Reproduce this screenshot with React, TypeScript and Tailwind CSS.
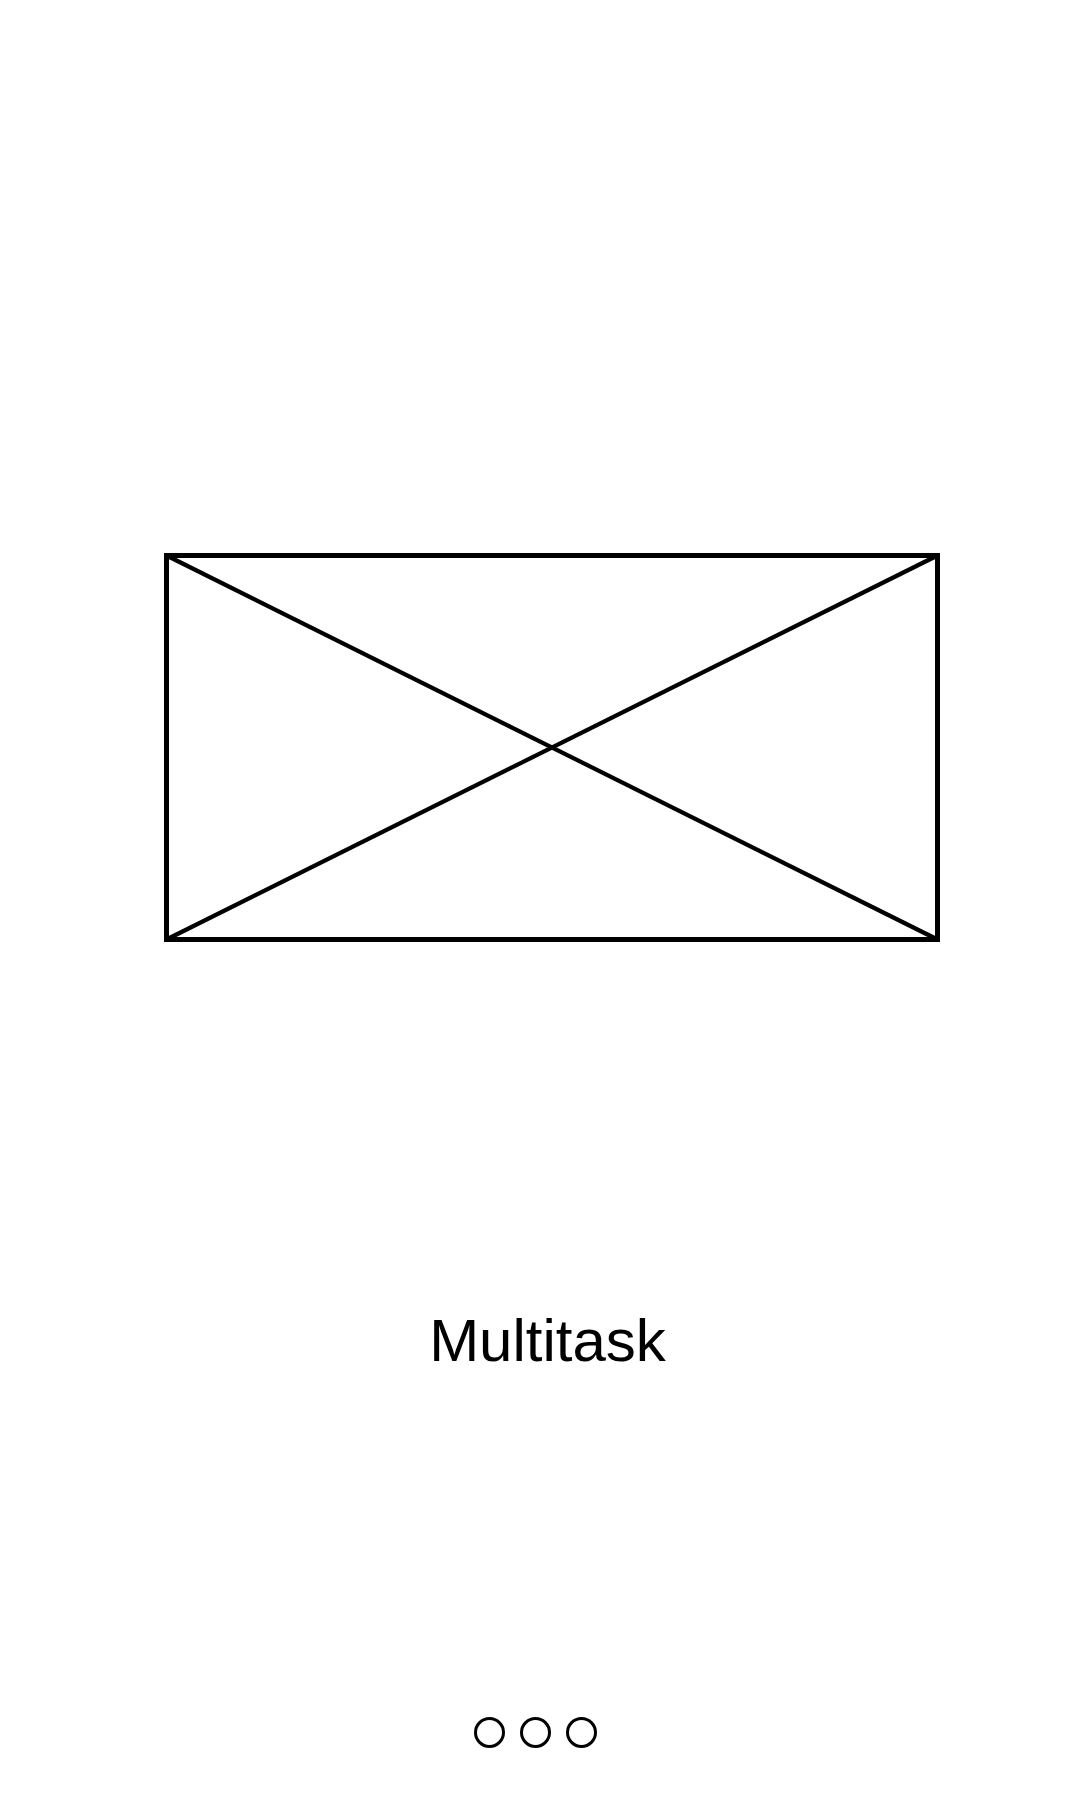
export default function App() {
  return (
    <div className="w-[1080px] h-[1800px] bg-white flex flex-col font-['Liberation_Sans',Arial,sans-serif] text-black">
      {/* image placeholder */}
      <div className="mt-[553px] ml-[164px]">
        <svg width="776" height="389" viewBox="0 0 776 389" className="block">
          <rect x="2.5" y="2.5" width="771" height="384" fill="none" stroke="#000" strokeWidth="5" />
          <line x1="2.5" y1="2.5" x2="773.5" y2="386.5" stroke="#000" strokeWidth="4.2" />
          <line x1="2.5" y1="386.5" x2="773.5" y2="2.5" stroke="#000" strokeWidth="4.2" />
        </svg>
      </div>

      <div className="mt-[369px] flex justify-center pl-[15px]">
        <span className="text-[60px] leading-none">Multitask</span>
      </div>

      {/* pager */}
      <div className="mt-[346px] flex justify-center gap-[15px] pr-[10px]">
        <span className="w-[31px] h-[31px] rounded-full border-[3px] border-black" />
        <span className="w-[31px] h-[31px] rounded-full border-[3px] border-black" />
        <span className="w-[31px] h-[31px] rounded-full border-[3px] border-black" />
      </div>
    </div>
  );
}
